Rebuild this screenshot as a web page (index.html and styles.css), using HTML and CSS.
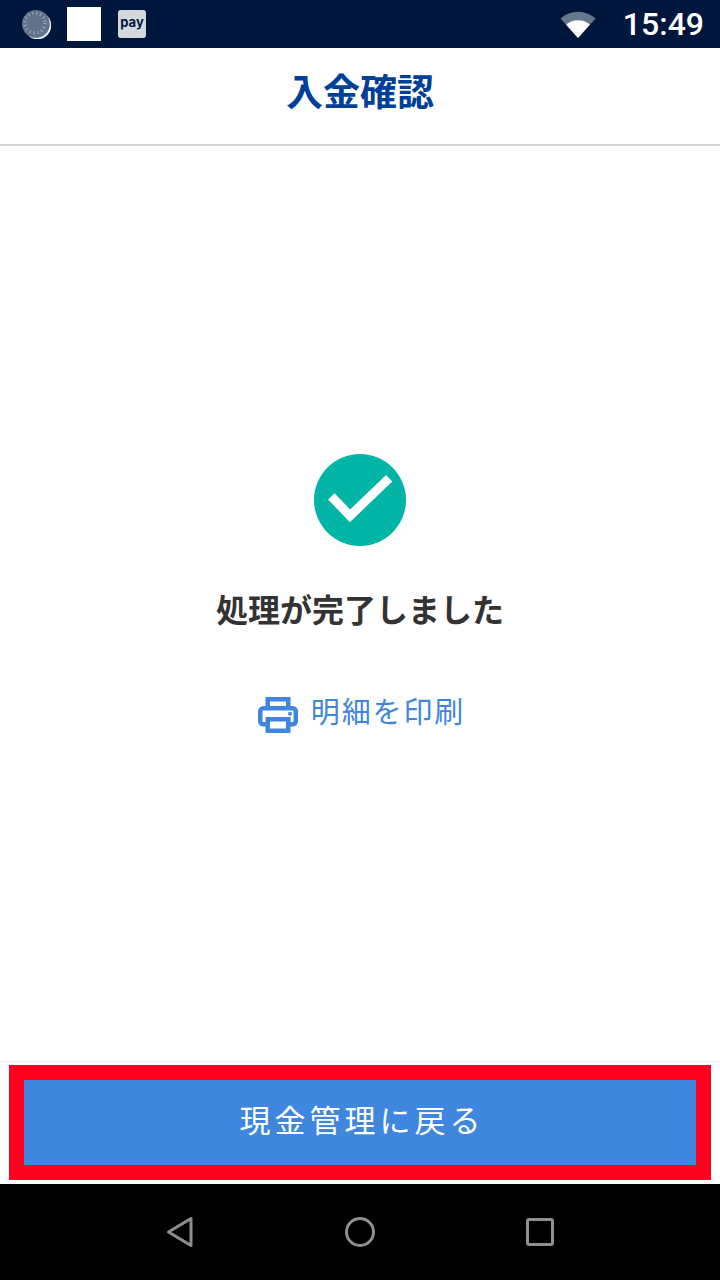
FILE: index.html
```html
<!DOCTYPE html>
<html lang="ja">
<head>
  <meta charset="utf-8">
  <title>入金確認</title>
  <link rel="stylesheet" href="styles.css">
</head>
<body>
  <div class="status-bar">
    <div class="status-icons">
      <svg class="icon-spinner" width="30" height="30" viewBox="0 0 30 30">
        <circle cx="15" cy="15" r="14" fill="#5f7288"/>
        <path d="M26 6.5A14 14 0 0 1 7 26.5A13 13 0 0 0 26 6.5Z" fill="#e8ecef"/>
        <circle cx="14" cy="14" r="10" fill="none" stroke="#9aa6b2" stroke-width="3.5" stroke-dasharray="1.2 2.8"/>
      </svg>
      <div class="icon-blank"></div>
      <div class="icon-pay">pay</div>
    </div>
    <div class="status-right">
      <svg class="icon-wifi" width="36" height="28" viewBox="0 0 36 28">
        <path d="M0.5 8.5C10.5 -0.5 25.5 -0.5 35.5 8.5L18 28Z" fill="#66788c"/>
        <path d="M6 14.5C13 8.7 23 8.7 30 14.5L18 28Z" fill="#fff"/>
      </svg>
      <span class="clock">15:49</span>
    </div>
  </div>

  <div class="header">
    <h1>入金確認</h1>
  </div>

  <div class="content">
    <svg class="icon-check" width="92" height="92" viewBox="0 0 92 92">
      <circle cx="46" cy="46" r="46" fill="#00b5a5"/>
      <path d="M17.3 42.3L36 61.8L75.2 24.2" fill="none" stroke="#fff" stroke-width="9"/>
    </svg>
    <div class="done-text">処理が完了しました</div>
    <div class="print-link">
      <svg class="icon-print" width="40" height="36" viewBox="0 0 40 36">
        <path d="M9.75 11V2.25H30.25V11" fill="none" stroke="#3f86de" stroke-width="4.5"/>
        <rect x="2.25" y="11.25" width="35.5" height="16" rx="3" fill="#fff" stroke="#3f86de" stroke-width="4.5"/>
        <rect x="9.75" y="22.25" width="20.5" height="11.5" fill="#fff" stroke="#3f86de" stroke-width="4.5"/>
        <circle cx="32" cy="16.7" r="2" fill="#3f86de"/>
      </svg>
      <span>明細を印刷</span>
    </div>
  </div>

  <div class="footer">
    <button class="back-btn">現金管理に戻る</button>
  </div>

  <div class="nav-bar">
    <svg width="28" height="32" viewBox="0 0 28 32">
      <path d="M25 2.5V29.5L2.5 16Z" fill="none" stroke="#8f8f8f" stroke-width="3" stroke-linejoin="round"/>
    </svg>
    <svg width="32" height="32" viewBox="0 0 32 32">
      <circle cx="16" cy="16" r="13.5" fill="none" stroke="#8f8f8f" stroke-width="3"/>
    </svg>
    <svg width="28" height="28" viewBox="0 0 28 28">
      <rect x="1.5" y="1.5" width="25" height="25" rx="1.5" fill="none" stroke="#8f8f8f" stroke-width="3"/>
    </svg>
  </div>
</body>
</html>
```

FILE: styles.css
```css
body {
  width: 720px;
  height: 1280px;
  margin: 0;
  display: flex;
  flex-direction: column;
  font-family: "Noto Sans CJK JP", "Noto Sans", sans-serif;
  background: #fff;
  overflow: hidden;
}

.status-bar {
  height: 48px;
  flex-shrink: 0;
  display: flex;
  justify-content: space-between;
  align-items: center;
  background: #00173d;
}

.status-icons {
  display: flex;
  align-items: center;
  padding-left: 21px;
}

.icon-blank {
  width: 34px;
  height: 34px;
  margin-left: 16px;
  background: #fff;
}

.icon-pay {
  width: 28px;
  height: 28px;
  margin-left: 17px;
  border-radius: 3px;
  background: #d3d8dc;
  color: #00173d;
  font-family: Inter, sans-serif;
  font-size: 13px;
  font-weight: 700;
  line-height: 25px;
  text-align: center;
}

.status-right {
  display: flex;
  align-items: center;
  padding-right: 16px;
}

.clock {
  margin-left: 27px;
  color: #fff;
  font-family: Roboto, sans-serif;
  font-size: 32px;
  font-weight: 500;
  line-height: 48px;
}

.header {
  height: 98px;
  flex-shrink: 0;
  display: flex;
  justify-content: center;
  padding-top: 18px;
  box-sizing: border-box;
  border-bottom: 2px solid #d6d6d6;
}

.header h1 {
  margin: 0;
  font-size: 37px;
  font-weight: 700;
  line-height: 48px;
  color: #004098;
}

.content {
  flex: 1;
  display: flex;
  flex-direction: column;
  align-items: center;
  padding-top: 308px;
  box-sizing: border-box;
}

.done-text {
  margin-top: 40px;
  font-size: 32px;
  font-weight: 700;
  line-height: 44px;
  color: #333;
}

.print-link {
  display: flex;
  align-items: center;
  margin-top: 67px;
  padding-left: 3px;
  color: #3f86de;
  font-size: 29px;
  letter-spacing: 1.9px;
  line-height: 36px;
}

.print-link span {
  margin-left: 13px;
  margin-top: -10px;
}

.footer {
  flex-shrink: 0;
  padding: 3px 9px 4px;
  border-top: 1px solid #f0f0f0;
}

.back-btn {
  display: block;
  width: 100%;
  height: 115px;
  padding: 0 0 8px 4px;
  border: 15px solid #ff0020;
  background: #3f86de;
  color: #fff;
  font-family: inherit;
  font-size: 31px;
  letter-spacing: 4px;
}

.nav-bar {
  height: 96px;
  flex-shrink: 0;
  display: flex;
  justify-content: space-between;
  align-items: center;
  padding: 0 166px;
  background: #000;
}
```
